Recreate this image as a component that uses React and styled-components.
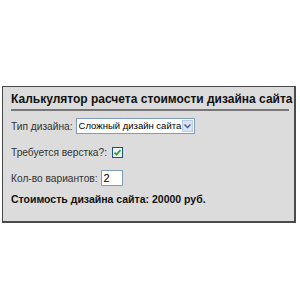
import React from 'react'
import styled, { createGlobalStyle } from 'styled-components'

const GlobalStyle = createGlobalStyle`
  html, body {
    margin: 0;
    padding: 0;
    background: #fff;
  }
  body {
    font-family: "Liberation Sans", Arial, sans-serif;
  }
`

const Page = styled.div`
  width: 300px;
  height: 300px;
  padding: 86px 0 0 2px;
  box-sizing: border-box;
`

const Calc = styled.div`
  width: 294px;
  height: 137px;
  box-sizing: border-box;
  background: #dcdcdc;
  border: 1px solid #4a4a4a;
  border-right-width: 2px;
  border-bottom-width: 2px;
  padding: 5px 5px 0 8px;
  display: flex;
  flex-direction: column;
`

const Title = styled.div`
  font-size: 12px;
  line-height: 15px;
  font-weight: bold;
  color: #111;
  padding-bottom: 2px;
  border-bottom: 2px solid #777;
  margin-bottom: 7px;
  white-space: nowrap;
`

const Row = styled.div`
  display: flex;
  align-items: center;
  height: 16px;
  margin-bottom: ${p => p.gap || 10}px;
  font-size: 10.2px;
  color: #333;
  white-space: nowrap;
`

const Label = styled.span`
  margin-right: 3px;
`

const Select = styled.div`
  display: flex;
  align-items: stretch;
  width: 119px;
  height: 16px;
  box-sizing: border-box;
  border: 1px solid #7f9db9;
  background: #fff;
  font-size: 9.5px;
  color: #000;
`

const SelectText = styled.span`
  flex: 1;
  padding-left: 2px;
  line-height: 14px;
`

const SelectArrow = styled.span`
  width: 14px;
  margin: 1px;
  background: #d8e3f5;
  border: 1px solid #b9c9e8;
  box-sizing: border-box;
  display: flex;
  align-items: center;
  justify-content: center;
`

const Check = styled.span`
  width: 11px;
  height: 11px;
  box-sizing: border-box;
  border: 1px solid #1c5180;
  background: #eef2ee;
  display: flex;
  align-items: center;
  justify-content: center;
  margin-left: 2px;
`

const NumInput = styled.span`
  width: 22px;
  height: 16px;
  box-sizing: border-box;
  border: 1px solid #7f9db9;
  background: #fff;
  font-size: 11px;
  color: #000;
  padding-left: 2px;
  line-height: 14px;
`

const Total = styled.div`
  font-size: 10.5px;
  line-height: 13px;
  font-weight: bold;
  color: #111;
  margin-top: -2px;
  white-space: nowrap;
`

export default function App() {
  return (
    <>
      <GlobalStyle />
      <Page>
        <Calc>
          <Title>Калькулятор расчета стоимости дизайна сайта</Title>
          <Row>
            <Label>Тип дизайна:</Label>
            <Select>
              <SelectText>Сложный дизайн сайта</SelectText>
              <SelectArrow>
                <svg width="7" height="5" viewBox="0 0 7 5">
                  <path d="M0.5 0.5 L3.5 3.5 L6.5 0.5" fill="none" stroke="#4d6185" strokeWidth="1.5" />
                </svg>
              </SelectArrow>
            </Select>
          </Row>
          <Row>
            <Label>Требуется верстка?:</Label>
            <Check>
              <svg width="7" height="7" viewBox="0 0 7 7">
                <path d="M0.5 3.5 L2.5 5.5 L6.5 1" fill="none" stroke="#21a121" strokeWidth="1.6" />
              </svg>
            </Check>
          </Row>
          <Row gap={9}>
            <Label>Кол-во вариантов:</Label>
            <NumInput>2</NumInput>
          </Row>
          <Total>Стоимость дизайна сайта: 20000 руб.</Total>
        </Calc>
      </Page>
    </>
  )
}
